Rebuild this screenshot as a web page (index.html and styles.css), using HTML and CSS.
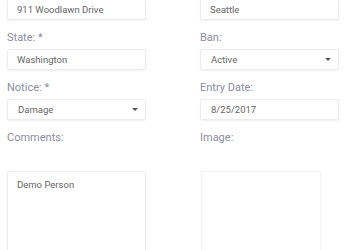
FILE: index.html
```html
<!DOCTYPE html>
<html lang="en">
<head>
  <meta charset="UTF-8">
  <meta name="viewport" content="width=device-width, initial-scale=1.0">
  <title>Person</title>
  <link rel="stylesheet" href="styles.css">
</head>
<body>

<div class="form">
  <div class="field">
    <label for="address">Address:</label>
    <input type="text" id="address" class="box" value="911 Woodlawn Drive">
  </div>
  <div class="field">
    <label for="city">City:</label>
    <input type="text" id="city" class="box" value="Seattle">
  </div>

  <div class="field">
    <label for="state">State: *</label>
    <input type="text" id="state" class="box" value="Washington">
  </div>
  <div class="field">
    <label for="ban">Ban:</label>
    <div class="box select" id="ban">Active<span class="caret"></span></div>
  </div>

  <div class="field">
    <label for="notice">Notice: *</label>
    <div class="box select" id="notice">Damage<span class="caret"></span></div>
  </div>
  <div class="field">
    <label for="entryDate">Entry Date:</label>
    <input type="text" id="entryDate" class="box date" value="8/25/2017">
  </div>

  <div class="field">
    <label for="comments">Comments:</label>
    <textarea id="comments" class="box notes">Demo Person</textarea>
  </div>
  <div class="field">
    <label>Image:</label>
    <div class="photo"></div>
  </div>
</div>

</body>
</html>
```

FILE: styles.css
```css
body {
  font-family: Roboto, "Liberation Sans", sans-serif;
  background-color: #ffffff;
  margin: 0;
  overflow: hidden;
}
.form {
  display: grid;
  grid-template-columns: 139px 139px;
  column-gap: 54px;
  padding-left: 7px;
  margin-top: -30px;
}
.field label {
  display: block;
  font-size: 11px;
  line-height: 15px;
  color: #8c8ca4;
  margin-top: 10px;
  margin-bottom: 4px;
}
.box {
  display: block;
  width: 100%;
  height: 21px;
  box-sizing: border-box;
  margin: 0;
  padding: 0 9px;
  font-family: inherit;
  font-size: 9.5px;
  line-height: 19px;
  color: #666666;
  background: #ffffff;
  border: 1px solid #ececec;
  border-radius: 2px;
  box-shadow: 0 1px 2px rgba(0, 0, 0, 0.06);
  outline: none;
}
.select {
  position: relative;
  padding-left: 10px;
}
.date {
  padding-left: 10px;
}
.caret {
  position: absolute;
  right: 7px;
  top: 8px;
  width: 0;
  height: 0;
  border-left: 3px solid transparent;
  border-right: 3px solid transparent;
  border-top: 3px solid #555555;
}
.notes {
  height: 120px;
  margin-top: 26px;
  padding: 6px 9px;
  line-height: 13px;
  resize: none;
}
.photo {
  width: 118px;
  height: 120px;
  margin-top: 26px;
  margin-left: 1px;
  border: 1px solid #f3f3f3;
  box-shadow: 0 1px 2px rgba(0, 0, 0, 0.04);
}
```
